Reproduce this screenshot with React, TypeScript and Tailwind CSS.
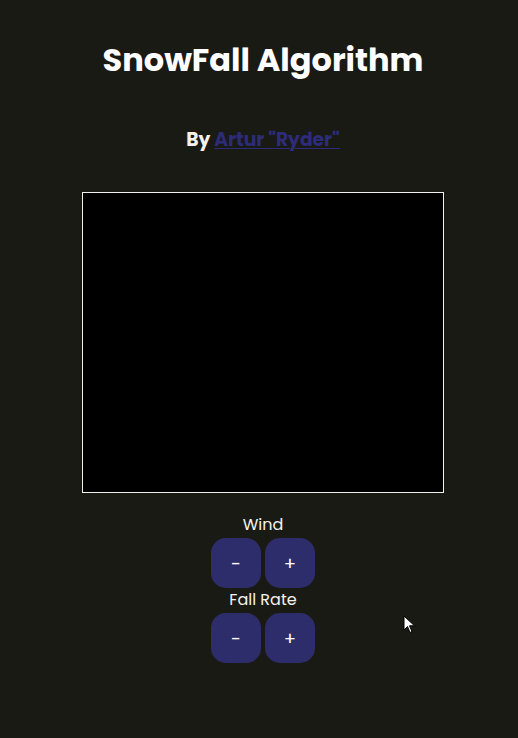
import React from 'react';

const font = { fontFamily: 'Poppins, Inter, "Noto Sans", sans-serif' };

const ControlButton = ({ label }: { label: string }) => (
  <button className="w-[50px] h-[50px] rounded-[15px] bg-[#2e2d6c] text-white text-[18px] font-normal flex items-center justify-center">
    {label}
  </button>
);

const Control = ({ title }: { title: string }) => (
  <div className="flex flex-col items-center">
    <span className="text-[16px] text-[#f4f2ee] leading-[24px]">{title}</span>
    <div className="flex gap-[4px] mt-[1px]">
      <ControlButton label="-" />
      <ControlButton label="+" />
    </div>
  </div>
);

export default function App() {
  return (
    <div className="relative w-[518px] h-[738px] bg-[#1a1a15] overflow-hidden pl-[8px]" style={font}>
      <div className="flex flex-col items-center">
        <h1 className="mt-[40px] text-[32px] font-bold text-white leading-[40px]">SnowFall Algorithm</h1>
        <p className="mt-[47px] text-[18.7px] font-bold text-[#f4f2ee] leading-[26px]">
          By{' '}
          <a className="text-[#2d2c78] underline underline-offset-2 decoration-1">Artur "Ryder"</a>
        </p>
        <div className="mt-[39px] w-[362px] h-[301px] border border-[#f0f0f0] bg-black" />
        <div className="mt-[20px] flex flex-col items-center">
          <Control title="Wind" />
          <Control title="Fall Rate" />
        </div>
      </div>
      {/* mouse pointer */}
      <svg className="absolute left-[403px] top-[615px]" width="13" height="20" viewBox="0 0 13 20">
        <path d="M1 1 L1 15 L4.5 11.5 L7 17.5 L9 16.5 L6.5 10.8 L11.5 10.8 Z" fill="#fff" stroke="#000" strokeWidth="1" />
      </svg>
    </div>
  );
}
